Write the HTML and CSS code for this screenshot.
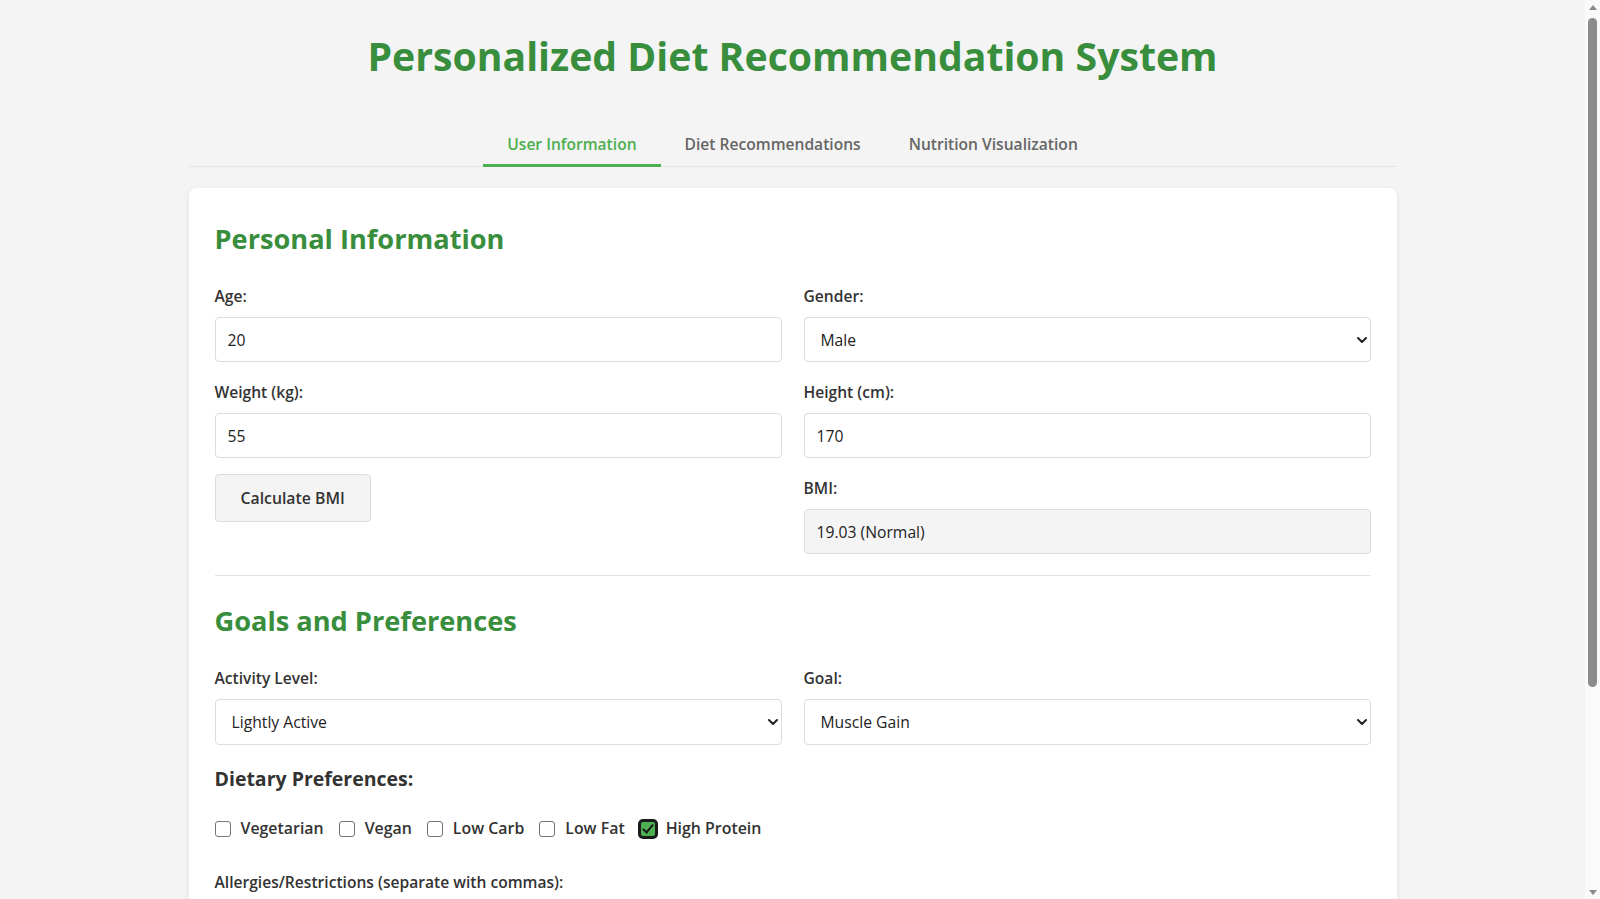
FILE: index.html
```html
<!DOCTYPE html>
<html lang="en">
<head>
<meta charset="utf-8">
<title>Personalized Diet Recommendation System</title>
<link rel="stylesheet" href="styles.css">
</head>
<body>
<div class="container">
  <h1 class="title">Personalized Diet Recommendation System</h1>
  <nav class="tabs">
    <button class="tab active">User Information</button>
    <button class="tab">Diet Recommendations</button>
    <button class="tab">Nutrition Visualization</button>
  </nav>
  <div class="card">
    <section class="section">
      <h2 class="section-title">Personal Information</h2>
      <div class="grid">
        <div class="col">
          <div class="group">
            <label class="label" for="age">Age:</label>
            <input class="field" id="age" type="text" value="20">
          </div>
          <div class="group">
            <label class="label" for="weight">Weight (kg):</label>
            <input class="field" id="weight" type="text" value="55">
          </div>
          <div class="group group-btn">
            <button class="btn">Calculate BMI</button>
          </div>
        </div>
        <div class="col">
          <div class="group">
            <label class="label" for="gender">Gender:</label>
            <div class="select-wrap">
              <select class="field select" id="gender"><option>Male</option><option>Female</option></select>
              <svg class="chev" width="12" height="8" viewBox="0 0 12 8"><path d="M2 2 L6 6 L10 2" fill="none" stroke="#222" stroke-width="2" stroke-linecap="round" stroke-linejoin="round"/></svg>
            </div>
          </div>
          <div class="group">
            <label class="label" for="height">Height (cm):</label>
            <input class="field" id="height" type="text" value="170">
          </div>
          <div class="group">
            <label class="label" for="bmi">BMI:</label>
            <input class="field readonly" id="bmi" type="text" value="19.03 (Normal)" readonly>
          </div>
        </div>
      </div>
    </section>
    <hr class="divider">
    <section class="section">
      <h2 class="section-title">Goals and Preferences</h2>
      <div class="grid">
        <div class="group">
          <label class="label" for="activity">Activity Level:</label>
          <div class="select-wrap">
            <select class="field select select-tall" id="activity"><option>Lightly Active</option></select>
            <svg class="chev" width="12" height="8" viewBox="0 0 12 8"><path d="M2 2 L6 6 L10 2" fill="none" stroke="#222" stroke-width="2" stroke-linecap="round" stroke-linejoin="round"/></svg>
          </div>
        </div>
        <div class="group">
          <label class="label" for="goal">Goal:</label>
          <div class="select-wrap">
            <select class="field select select-tall" id="goal"><option>Muscle Gain</option></select>
            <svg class="chev" width="12" height="8" viewBox="0 0 12 8"><path d="M2 2 L6 6 L10 2" fill="none" stroke="#222" stroke-width="2" stroke-linecap="round" stroke-linejoin="round"/></svg>
          </div>
        </div>
      </div>
      <h3 class="sub-title">Dietary Preferences:</h3>
      <div class="checks">
        <label class="check"><input type="checkbox" class="box"><span>Vegetarian</span></label>
        <label class="check"><input type="checkbox" class="box"><span>Vegan</span></label>
        <label class="check"><input type="checkbox" class="box"><span>Low Carb</span></label>
        <label class="check"><input type="checkbox" class="box"><span>Low Fat</span></label>
        <label class="check"><input type="checkbox" class="box" checked><span>High Protein</span></label>
      </div>
      <div class="group">
        <label class="label" for="allergies">Allergies/Restrictions (separate with commas):</label>
        <input class="field" id="allergies" type="text" placeholder="e.g., nuts, dairy, gluten">
      </div>
      <button class="btn btn-primary">Get Recommendations</button>
    </section>
  </div>
</div>
<div class="scrollbar" aria-hidden="true">
  <span class="arrow arrow-up"></span>
  <span class="thumb"></span>
  <span class="arrow arrow-down"></span>
</div>
</body>
</html>
```

FILE: styles.css
```css
body {
  margin: 0 15px 0 0;
  background: #f4f4f4;
  color: #333;
  font-family: "Open Sans", "Noto Sans", "Liberation Sans", sans-serif;
  font-size: 16px;
}

/* window scrollbar (drawn, since the headless browser hides its own) */
.scrollbar {
  position: fixed;
  top: 0;
  right: 0;
  bottom: 0;
  width: 15px;
  background: #fafafa;
  display: flex;
  flex-direction: column;
  align-items: center;
}

.arrow {
  width: 0;
  height: 0;
  border-left: 4.5px solid transparent;
  border-right: 4.5px solid transparent;
}

.arrow-up {
  margin-top: 5px;
  border-bottom: 5px solid #8a8a8a;
}

.arrow-down {
  margin-top: auto;
  margin-bottom: 4px;
  border-top: 5px solid #8a8a8a;
}

.thumb {
  margin-top: 8px;
  width: 9px;
  height: 669px;
  border-radius: 5px;
  background: #8b8b8b;
}

.container {
  width: 1208px;
  margin: 0 auto;
  padding: 30px 0 110px;
}

.title {
  margin: 0;
  text-align: center;
  color: #388e3c;
  font-size: 39.2px;
  line-height: 52px;
  font-weight: 700;
}

.tabs {
  display: flex;
  justify-content: center;
  margin-top: 41px;
  border-bottom: 1px solid #e4e4e4;
}

.tab {
  background: none;
  border: none;
  border-bottom: 3px solid transparent;
  margin-bottom: -1px;
  padding: 9px 24px 8px;
  font-family: inherit;
  font-size: 15.6px;
  line-height: 24px;
  font-weight: 600;
  color: #666;
  cursor: pointer;
}

.tab.active {
  color: #4caf50;
  border-bottom-color: #4caf50;
}

.card {
  margin-top: 21px;
  background: #fff;
  border-radius: 8px;
  box-shadow: 0 2px 6px rgba(0, 0, 0, 0.08);
  padding: 25px 26px 30px;
}

.section-title {
  margin: 9px 0 28px;
  color: #388e3c;
  font-size: 27.2px;
  line-height: 34px;
  font-weight: 700;
}

.grid {
  display: grid;
  grid-template-columns: 1fr 1fr;
  column-gap: 22px;
}

.col {
  display: flex;
  flex-direction: column;
}

.group {
  display: flex;
  flex-direction: column;
  margin-bottom: 18px;
}

.group-btn {
  margin-top: -2px;
  align-items: flex-start;
}

.label {
  font-weight: 600;
  font-size: 15.6px;
  line-height: 24px;
  margin-bottom: 9px;
  color: #333;
}

.field {
  box-sizing: border-box;
  width: 100%;
  height: 45px;
  padding: 0 12px;
  border: 1px solid #ddd;
  border-radius: 4px;
  background: #fff;
  font-family: inherit;
  font-size: 15.7px;
  color: #222;
  outline: none;
}

.field::placeholder {
  color: #888;
}

.readonly {
  background: #f4f4f4;
}

.select-wrap {
  position: relative;
}

.select {
  appearance: none;
  -webkit-appearance: none;
  padding-left: 16px;
}

.select-tall {
  height: 46px;
}

.chev {
  position: absolute;
  right: 3px;
  top: 19px;
  pointer-events: none;
}

.btn {
  box-sizing: border-box;
  height: 48px;
  padding: 0 25px;
  border: 1px solid #ddd;
  border-radius: 4px;
  background: #f4f4f4;
  font-family: inherit;
  font-size: 15.8px;
  font-weight: 600;
  color: #333;
  cursor: pointer;
}

.btn-primary {
  background: #4caf50;
  border-color: #4caf50;
  color: #fff;
}

.divider {
  border: none;
  border-top: 1px solid #e3e3e3;
  margin: 3px 0 28px;
}

.sub-title {
  margin: 2px 0 23px;
  font-size: 19.5px;
  line-height: 28px;
  font-weight: 700;
  color: #333;
}

.checks {
  display: flex;
  align-items: center;
  gap: 15px;
  margin-bottom: 30px;
}

.check {
  display: flex;
  align-items: center;
  gap: 10px;
  font-weight: 600;
  font-size: 15.9px;
  line-height: 24px;
}

.box {
  appearance: none;
  -webkit-appearance: none;
  box-sizing: border-box;
  width: 16px;
  height: 16px;
  margin: 2px 0 0;
  border: 1px solid #767676;
  border-radius: 3px;
  background: #fff;
  position: relative;
}

.box:checked {
  background: #4caf50;
  border: 1px solid #1a1a1a;
  box-shadow: 0 0 0 2px #1a1a1a;
}

.box:checked::after {
  content: "";
  position: absolute;
  left: 4px;
  top: 0;
  width: 4px;
  height: 9px;
  border: solid #1a1a1a;
  border-width: 0 2px 2px 0;
  transform: rotate(40deg);
}
```
